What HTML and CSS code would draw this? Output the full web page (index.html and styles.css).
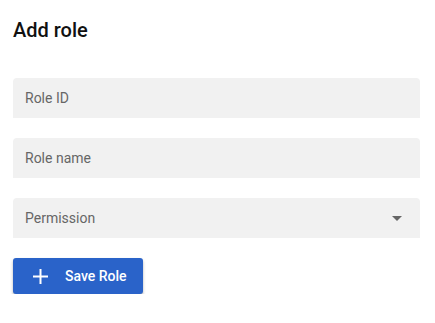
FILE: index.html
```html
<!DOCTYPE html>
<html>
<head>
<meta charset="utf-8">
<link rel="stylesheet" href="styles.css">
</head>
<body>
<div class="page">
  <h1 class="title">Add role</h1>
  <form class="form">
    <div class="field"><span class="label">Role ID</span></div>
    <div class="field"><span class="label">Role name</span></div>
    <div class="field select"><span class="label">Permission</span><span class="arrow"></span></div>
    <button type="button" class="btn">
      <svg class="plus" viewBox="0 0 15 15" width="15" height="15"><path d="M7.5 0v15M0 7.5h15" stroke="#fff" stroke-width="2"/></svg>
      <span>Save Role</span>
    </button>
  </form>
</div>
</body>
</html>
```
FILE: styles.css
```css
html, body { margin: 0; padding: 0; background: #fff; }
body { font-family: Roboto, "Noto Sans", sans-serif; }
.page { padding: 0 15px 0 13px; }
.title { margin: 0; padding-top: 18px; font-size: 20px; font-weight: 500; line-height: 24px; color: #111; }
.form { display: flex; flex-direction: column; gap: 20px; margin-top: 36px; align-items: flex-start; }
.field { width: 407px; height: 40px; box-sizing: border-box; background: #f1f1f1; border-radius: 4px 4px 0 0; display: flex; align-items: center; padding: 0 12px; }
.label { font-size: 14px; color: #666; }
.select { justify-content: space-between; padding-right: 18px; }
.arrow { width: 0; height: 0; border-left: 5px solid transparent; border-right: 5px solid transparent; border-top: 5px solid #666; }
.btn { display: flex; align-items: center; height: 36px; width: 130px; box-sizing: border-box; padding: 0 0 0 20px; border: none; border-radius: 3px; background: #2a63c9; color: #fff; font-family: Roboto, sans-serif; font-size: 14px; font-weight: 500; box-shadow: 0 2px 3px rgba(0,0,0,0.3); }
.plus { margin-right: 17px; flex: none; }
```
